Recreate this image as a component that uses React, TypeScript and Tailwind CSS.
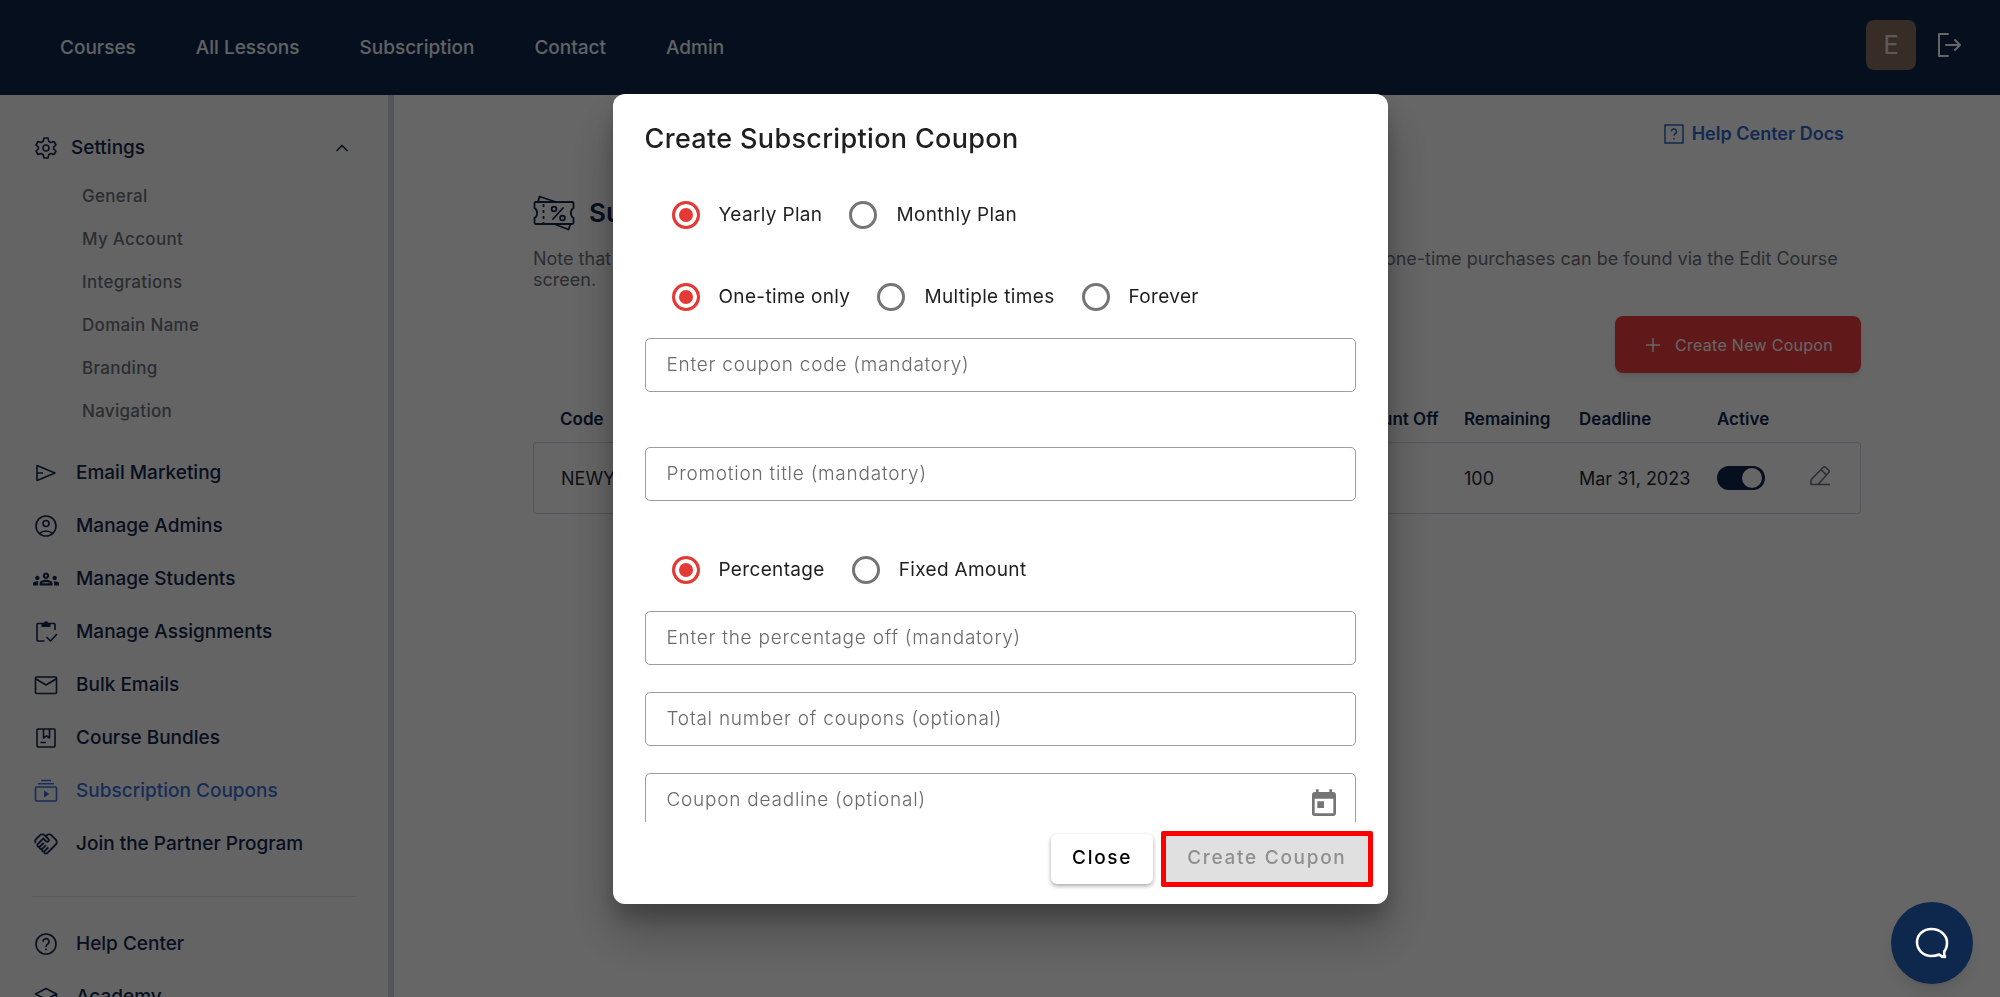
import React from 'react';
import { ChevronUp } from 'lucide-react';
import { MdOutlineGroups, MdOutlineHandshake, MdToday } from 'react-icons/md';

const navLinks = ['Courses', 'All Lessons', 'Subscription', 'Contact', 'Admin'];
const settingsLinks = ['General', 'My Account', 'Integrations', 'Domain Name', 'Branding', 'Navigation'];

const LineIcon = ({ children }: { children: React.ReactNode }) => (
  <svg viewBox="0 0 24 24" className="size-6" fill="none" stroke="currentColor" strokeWidth="1.6" strokeLinejoin="round">
    {children}
  </svg>
);

const SendIcon = () => (
  <LineIcon>
    <path d="M3 4.5 21 12 3 19.5ZM3 12h6" />
  </LineIcon>
);

const AccountIcon = () => (
  <LineIcon>
    <circle cx="12" cy="12" r="10" />
    <circle cx="12" cy="9.5" r="3" />
    <path d="M5.5 19.5c3.5-3.4 9.5-3.4 13 0" />
  </LineIcon>
);

const AssignmentIcon = () => (
  <LineIcon>
    <path d="M10.5 21H4a1 1 0 0 1-1-1V4.5a1 1 0 0 1 1-1h16a1 1 0 0 1 1 1V10" />
    <path d="M7.5 3.5h9V7h-9Z" fill="currentColor" stroke="none" />
    <circle cx="12" cy="3.5" r="1.5" />
    <path d="m12.5 17 4 4 6.5-7" />
  </LineIcon>
);

const MailIcon = () => (
  <LineIcon>
    <rect x="1.5" y="4" width="21" height="16.5" rx="1" />
    <path d="m2 6 10 6 10-6" />
  </LineIcon>
);

const BundleIcon = () => (
  <LineIcon>
    <rect x="3" y="3" width="18" height="18" rx="1" />
    <path d="M9.5 3v9l3-2.2 3 2.2V3M6.5 16.5h5.5" />
  </LineIcon>
);

const SubscriptionIcon = () => (
  <LineIcon>
    <rect x="1.5" y="8" width="21" height="14" rx="1" />
    <path d="M4 4.8h16M7 1.5h10" />
    <path d="M10 11.5v7l5.5-3.5Z" fill="currentColor" stroke="none" />
  </LineIcon>
);

const HelpIcon = () => (
  <LineIcon>
    <circle cx="12" cy="12" r="10" />
    <path d="M9 9.7a3 3 0 1 1 4.5 2.5Q12 13 12 15M12 16.5v1.7" />
  </LineIcon>
);

const SchoolIcon = () => (
  <LineIcon>
    <path d="M12 3.5 1.5 9 12 14.5 22.5 9ZM5.5 11.5v5.5l6.5 3.5 6.5-3.5v-5.5M22.5 9v7.5" />
  </LineIcon>
);

const GearIcon = () => (
  <LineIcon>
    <path d="M10 2h4l.7 3.2 2.2 1.3 3.1-1 2 3.5-2.4 2.2v1.6l2.4 2.2-2 3.5-3.1-1-2.2 1.3L14 22h-4l-.7-3.2-2.2-1.3-3.1 1-2-3.5 2.4-2.2v-1.6L2 9l2-3.5 3.1 1 2.2-1.3Z" />
    <circle cx="12" cy="12" r="3" />
  </LineIcon>
);

const TicketIcon = () => (
  <svg viewBox="0 0 42 36" className="h-9 w-[42px]" fill="none" stroke="currentColor" strokeWidth="1.8" strokeLinejoin="round" strokeLinecap="round">
    <path d="M3 7h36a1.5 1.5 0 0 1 1.5 1.5v4.5c-3.5 2-3.5 8 0 10v4.5A1.5 1.5 0 0 1 39 29H3a1.5 1.5 0 0 1-1.5-1.5V23c3.5-2 3.5-8 0-10V8.5A1.5 1.5 0 0 1 3 7Z" />
    <path d="M5 7 6.5 1.5 23 7M21 29l14.5 5.5L37.5 29" />
    <path d="M10.5 9v19" strokeDasharray="3 3" strokeLinecap="butt" />
    <path d="m20 24 10-11" />
    <circle cx="21" cy="14" r="2.4" />
    <circle cx="29.5" cy="23" r="2.4" />
  </svg>
);

const mainLinks = [
  { label: 'Email Marketing', icon: <SendIcon /> },
  { label: 'Manage Admins', icon: <AccountIcon /> },
  { label: 'Manage Students', icon: <MdOutlineGroups size={26} /> },
  { label: 'Manage Assignments', icon: <AssignmentIcon /> },
  { label: 'Bulk Emails', icon: <MailIcon /> },
  { label: 'Course Bundles', icon: <BundleIcon /> },
  { label: 'Subscription Coupons', icon: <SubscriptionIcon />, active: true },
  // the panel-coloured stroke thins the glyph to the weight of its neighbours
  { label: 'Join the Partner Program', icon: <MdOutlineHandshake size={26} stroke="#f9fafb" strokeWidth={0.4} /> },
];

function Header() {
  return (
    <header className="flex h-[95px] shrink-0 items-center justify-between bg-[#0d274d] pr-[38px] pl-[60px]">
      <nav className="flex gap-[60px] pt-0.5">
        {navLinks.map((link) => (
          <a key={link} href="#" className="text-[19px] font-medium text-[#f3f4f6]">
            {link}
          </a>
        ))}
      </nav>
      <div className="flex items-center gap-5 pb-1.5">
        <div className="flex size-[50px] items-center justify-center rounded-lg bg-[#8d6e63] text-[26px] text-[#e0e0e0]">E</div>
        <button aria-label="Log out" className="text-white">
          <svg viewBox="0 0 26 26" className="size-[26px]" fill="none" stroke="currentColor" strokeWidth="2" strokeLinecap="round" strokeLinejoin="round">
            <path d="M12 2H3v22h9M10 13h14M19 8l5 5-5 5" />
          </svg>
        </button>
      </div>
    </header>
  );
}

function SideLink({ label, icon, active }: { label: string; icon: React.ReactNode; active?: boolean }) {
  return (
    <a
      href="#"
      className={`flex h-6 items-center gap-4 text-[19px] leading-6 font-medium ${active ? 'text-[#3b72d9]' : 'text-[#14274d]'}`}
    >
      <span className="flex w-7 justify-center">{icon}</span>
      {label}
    </a>
  );
}

function Sidebar() {
  return (
    <aside className="w-[394px] shrink-0 overflow-hidden border-r-[6px] border-[#d1d5db] bg-[#f9fafb] pt-[41px] pr-[31px] pl-8">
      <button className="flex w-full items-center gap-[11px] pr-[5px] text-[19px] leading-6 font-medium text-[#14274d]">
        <span className="flex w-7 justify-center">
          <GearIcon />
        </span>
        Settings
        <ChevronUp size={20} className="ml-auto" />
      </button>
      <div className="mt-6 flex flex-col gap-[19px] pl-[50px]">
        {settingsLinks.map((link) => (
          <a key={link} href="#" className="text-[17px] leading-6 font-medium tracking-[0.018em] text-[#6b7280]">
            {link}
          </a>
        ))}
      </div>
      <div className="mt-[38px] flex flex-col gap-[29px] border-b border-[#e5e7eb] pb-10">
        {mainLinks.map((link) => (
          <SideLink key={link.label} {...link} />
        ))}
      </div>
      <div className="mt-[35px] flex flex-col gap-[29px]">
        <SideLink label="Help Center" icon={<HelpIcon />} />
        <SideLink label="Academy" icon={<SchoolIcon />} />
      </div>
    </aside>
  );
}

function CouponsPage() {
  return (
    <main className="min-w-0 flex-1 px-[139px] pt-[27px]">
      <div className="flex justify-end pr-[17px]">
        <a href="#" className="flex items-center gap-2 text-[18px] leading-6 font-semibold text-[#2f66cc]">
          <svg viewBox="0 0 20 20" className="size-5" fill="none" stroke="currentColor" strokeWidth="1.5">
            <rect x="1" y="1" width="18" height="18" />
            <path d="M7.5 7.5a2.5 2.5 0 1 1 3.5 2.3q-1 .5-1 2M10 14v1.5" />
          </svg>
          Help Center Docs
        </a>
      </div>
      <div className="mt-[47px] flex items-center gap-[14px] text-[#14274d]">
        <TicketIcon />
        <h1 className="text-[26px] font-semibold">Subscription Coupons</h1>
      </div>
      <p className="mt-4 text-[18px] leading-[21px] text-[#6b7280]">
        Note that these coupons can only be applied to the subscription plans of your schools. Coupons for one-time purchases can be found via the Edit Course screen.
      </p>
      <div className="mt-[26px] flex justify-end">
        <button className="flex h-[57px] items-center gap-3 rounded-lg bg-[#f23d3f] px-7 text-[16px] tracking-[0.018em] text-white shadow-md">
          <svg viewBox="0 0 20 20" className="size-5" fill="none" stroke="currentColor" strokeWidth="1.5">
            <path d="M10 3v14M3 10h14" />
          </svg>
          Create New Coupon
        </button>
      </div>
      <table className="mt-6 w-full table-fixed border-separate border-spacing-0 text-left text-[17px]">
        <colgroup>
          <col />
          <col className="w-[120px]" />
          <col className="w-[115px]" />
          <col className="w-[138px]" />
          <col className="w-[92px]" />
          <col className="w-[52px]" />
        </colgroup>
        <thead className="text-[#0d274d]">
          <tr className="h-[45px]">
            <th className="pl-[27px] font-semibold">Code</th>
            <th className="font-semibold">Amount Off</th>
            <th className="font-semibold">Remaining</th>
            <th className="font-semibold">Deadline</th>
            <th className="font-semibold">Active</th>
            <th aria-label="Edit" />
          </tr>
        </thead>
        <tbody className="text-[18px] text-[#1f2937]">
          <tr className="h-[72px]">
            <td className="rounded-l border-y border-l border-[#d1d5db] pl-[27px]">NEWYEAR</td>
            <td className="border-y border-[#d1d5db]">20%</td>
            <td className="border-y border-[#d1d5db]">100</td>
            <td className="border-y border-[#d1d5db]">Mar 31, 2023</td>
            <td className="border-y border-[#d1d5db]">
              <label className="flex h-6 w-12 items-center rounded-full bg-[#0d274d] px-[3px]">
                <input type="checkbox" defaultChecked aria-label="Active" className="ml-auto size-5 appearance-none rounded-full bg-white" />
              </label>
            </td>
            <td className="rounded-r border-y border-r border-[#d1d5db]">
              <button aria-label="Edit coupon" className="block pb-1 text-[#6b7280]">
                <svg viewBox="0 0 22 22" className="size-[22px]" fill="none" stroke="currentColor" strokeWidth="1.6" strokeLinejoin="round">
                  <path d="M2 19.5V16a3 3 0 0 1 .8-2L14 2.5a2 2 0 0 1 2.8 0L19.5 5a2 2 0 0 1 0 2.8L9 19.5ZM12 4.5l5.5 5.5M2 19.5h19" />
                </svg>
              </button>
            </td>
          </tr>
        </tbody>
      </table>
    </main>
  );
}

function RadioRow({ name, options }: { name: string; options: string[] }) {
  return (
    <div role="radiogroup" aria-label={name} className="flex h-7 shrink-0 items-center gap-[27px] pl-[27px]">
      {options.map((option, i) => (
        <label key={option} className="flex items-center gap-[19px] text-[19px] tracking-[0.018em] text-[#1f1f1f]">
          <input
            type="radio"
            name={name}
            defaultChecked={i === 0}
            className="size-7 appearance-none rounded-full border-[3px] border-[#757575] checked:border-[#e53935] checked:bg-[#e53935] checked:shadow-[inset_0_0_0_4px_white]"
          />
          <span className="pt-0.5">{option}</span>
        </label>
      ))}
    </div>
  );
}

function Field({ label }: { label: string }) {
  return (
    <input
      type="text"
      aria-label={label}
      placeholder={label}
      className="block h-[54px] w-full shrink-0 rounded-[5px] border border-[#9e9e9e] px-[21px] text-[19px] font-light tracking-[0.04em] text-[#212121] placeholder:text-[#6b6b6b]"
    />
  );
}

function CouponDialog() {
  return (
    <div className="fixed inset-0 flex items-center justify-center bg-black/60">
      <div
        role="dialog"
        aria-labelledby="dialog-title"
        className="flex h-[810px] w-[775px] flex-col rounded-xl bg-white shadow-[0_14px_20px_rgba(0,0,0,0.2),0_30px_50px_rgba(0,0,0,0.25)]"
      >
        <h2 id="dialog-title" className="px-8 pt-[25px] text-[27px] leading-10 font-medium tracking-[0.0125em] text-[#1f1f1f]">
          Create Subscription Coupon
        </h2>
        <div className="flex min-h-0 flex-1 flex-col overflow-hidden px-8 pt-[42px]">
          <div className="flex flex-col gap-[54px]">
            <RadioRow name="Plan" options={['Yearly Plan', 'Monthly Plan']} />
            <RadioRow name="Duration" options={['One-time only', 'Multiple times', 'Forever']} />
          </div>
          <div className="mt-[27px] flex flex-col gap-[55px]">
            <Field label="Enter coupon code (mandatory)" />
            <Field label="Promotion title (mandatory)" />
            <RadioRow name="Discount" options={['Percentage', 'Fixed Amount']} />
          </div>
          <div className="mt-[27px] flex flex-col gap-[27px]">
            <Field label="Enter the percentage off (mandatory)" />
            <Field label="Total number of coupons (optional)" />
            <div className="relative">
              <Field label="Coupon deadline (optional)" />
              <button aria-label="Open calendar" className="absolute top-[15px] right-4 text-[#757575]">
                <MdToday size={32} />
              </button>
            </div>
          </div>
        </div>
        <div className="flex h-[82px] shrink-0 items-center justify-end gap-2 pr-[15px] pb-2">
          <button className="h-[50px] rounded-md bg-white px-[21px] text-[19px] font-medium tracking-[0.09em] text-black shadow-[0_2px_4px_rgba(0,0,0,0.35)]">
            Close
          </button>
          <button disabled className="h-[56px] rounded-xs border-[5px] border-[#fe0000] bg-[#e0e0e0] px-[21px] text-[19px] font-medium tracking-[0.09em] text-[#8f8f8f]">
            Create Coupon
          </button>
        </div>
      </div>
    </div>
  );
}

export default function App() {
  return (
    <div className="flex h-screen flex-col overflow-hidden bg-white font-[Inter,sans-serif]">
      <Header />
      <div className="flex min-h-0 flex-1">
        <Sidebar />
        <CouponsPage />
      </div>
      <CouponDialog />
      <button
        aria-label="Open chat"
        className="fixed right-[27px] bottom-[13px] flex size-[82px] items-center justify-center rounded-full bg-[#0d274d] text-white shadow-lg"
      >
        <svg viewBox="0 0 34 32" className="h-8 w-[34px]" fill="none" stroke="currentColor" strokeWidth="2.6" strokeLinejoin="round">
          <path d="M16.5 2C8.5 2 2 7.5 2 15s6 14 14.5 14c3 0 5.5-.5 7.5-1.5 1.5 1.5 3.5 2.5 6 2.5-.8-1.5-1-3.5-.8-5.5C31.5 22 32 18.5 32 15.5 32 8 25 2 16.5 2Z" />
        </svg>
      </button>
    </div>
  );
}
